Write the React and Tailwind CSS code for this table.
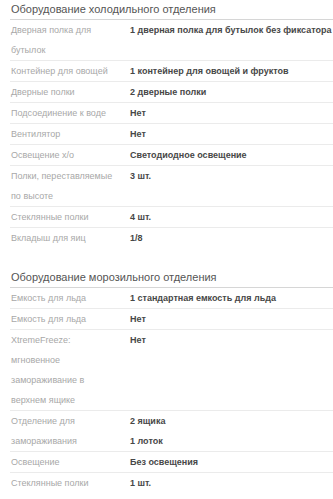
import React from "react";

const sections = [
  {
    title: "Оборудование холодильного отделения",
    rows: [
      { label: "Дверная полка для бутылок", value: ["1 дверная полка для бутылок без фиксатора"] },
      { label: "Контейнер для овощей", value: ["1 контейнер для овощей и фруктов"] },
      { label: "Дверные полки", value: ["2 дверные полки"] },
      { label: "Подсоединение к воде", value: ["Нет"] },
      { label: "Вентилятор", value: ["Нет"] },
      { label: "Освещение х/о", value: ["Светодиодное освещение"] },
      { label: "Полки, переставляемые по высоте", value: ["3 шт."] },
      { label: "Стеклянные полки", value: ["4 шт."] },
      { label: "Вкладыш для яиц", value: ["1/8"] },
    ],
  },
  {
    title: "Оборудование морозильного отделения",
    rows: [
      { label: "Емкость для льда", value: ["1 стандартная емкость для льда"] },
      { label: "Емкость для льда", value: ["Нет"] },
      { label: "XtremeFreeze: мгновенное замораживание в верхнем ящике", value: ["Нет"] },
      { label: "Отделение для замораживания", value: ["2 ящика", "1 лоток"] },
      { label: "Освещение", value: ["Без освещения"] },
      { label: "Стеклянные полки", value: ["1 шт."] },
    ],
  },
];

const App = () => {
  return (
    <div className="w-[333px] h-[499px] overflow-hidden bg-white pl-[10px] font-['Liberation_Sans',Arial,sans-serif]">
      {sections.map((sec, idx) => (
        <div key={idx} className={idx > 0 ? "mt-[20px]" : ""}>
          {/* Section title */}
          <h2 className="text-[11px] leading-[14px] pl-[1px] pt-[2px] pb-[3px] text-[#555] font-normal border-b border-[#d6d6d6]">
            {sec.title}
          </h2>

          {/* Spec rows */}
          <div className="divide-y divide-[#ebebeb]">
            {sec.rows.map((row, i) => (
              <div key={i} className="flex text-[9px] leading-[20px]">
                <div className="w-[120px] shrink-0 pl-[1px] pr-[14px] text-[#a8a8a8]">{row.label}</div>
                <div className="font-bold text-[#474747]">
                  {row.value.map((v, j) => (
                    <div key={j}>{v}</div>
                  ))}
                </div>
              </div>
            ))}
          </div>
        </div>
      ))}
    </div>
  );
};

export default App;
